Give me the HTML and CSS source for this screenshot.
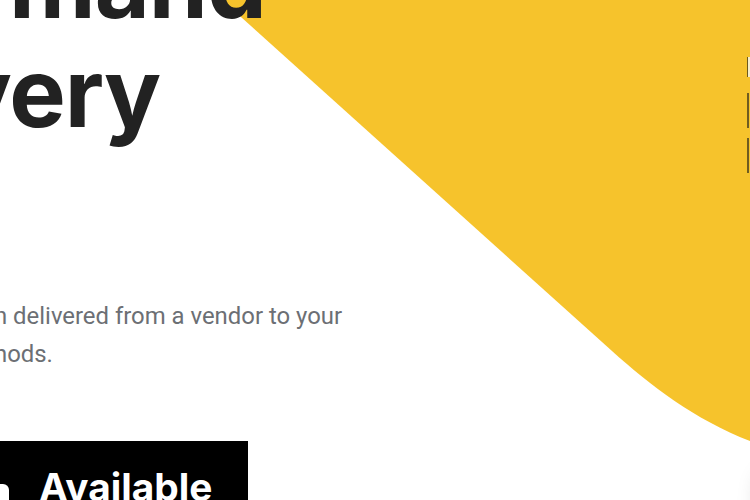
FILE: index.html
```html
<!DOCTYPE html>
<html lang="en">
<head>
<meta charset="utf-8">
<title>On-demand delivery</title>
<link rel="stylesheet" href="styles.css">
</head>
<body>
  <div class="blob" aria-hidden="true">
    <svg width="750" height="500" viewBox="0 0 750 500">
      <path d="M222 0 L612 351 C650 385 695 420 750 441 L750 0 Z" fill="#F6C32C"/>
    </svg>
  </div>
  <main class="hero">
    <div class="hero-text">
      <h1 class="title"><span class="line line-1">mand</span><span class="line line-2">very</span></h1>
      <p class="lead">n delivered from a vendor to your<br>hods.</p>
      <a class="store-btn" href="#">
        <span class="store-icon"></span>
        <span class="store-label">Available</span>
      </a>
    </div>
  </main>
  <div class="edge-marks" aria-hidden="true">
    <span class="mark mark-light"></span>
    <span class="mark mark-dark"></span>
    <span class="mark mark-dark"></span>
  </div>
  <div class="card-shadow" aria-hidden="true"></div>
</body>
</html>
```

FILE: styles.css
```css
html, body {
  margin: 0;
  padding: 0;
}
body {
  width: 750px;
  height: 500px;
  overflow: hidden;
  background: #ffffff;
  position: relative;
  font-family: "Roboto", "Liberation Sans", sans-serif;
}
.blob {
  position: absolute;
  left: 0;
  top: 0;
  width: 750px;
  height: 500px;
  z-index: 0;
}
.blob svg {
  display: block;
}
.hero {
  position: relative;
  z-index: 1;
}
.hero-text {
  display: flex;
  flex-direction: column;
  align-items: flex-start;
}
.title {
  margin: -71px 0 0 0;
  font-family: "Inter", "Open Sans", sans-serif;
  font-weight: 700;
  font-size: 95px;
  line-height: 109px;
  color: #222222;
  letter-spacing: -1px;
  display: flex;
  flex-direction: column;
}
.line-1 {
  margin-left: 9px;
}
.line-2 {
  margin-left: -45px;
}
.lead {
  margin: 150px 0 0 -6px;
  font-family: "Roboto", sans-serif;
  font-size: 23.9px;
  line-height: 38px;
  color: #6c6f74;
}
.store-btn {
  margin-top: 68px;
  margin-left: -20px;
  width: 268px;
  height: 90px;
  background: #000000;
  color: #ffffff;
  text-decoration: none;
  display: flex;
  align-items: flex-start;
  gap: 30px;
  padding: 24px 0 0 12px;
  box-sizing: border-box;
}
.store-icon {
  margin-top: 19px;
  width: 17px;
  height: 24px;
  background: #ffffff;
  border-radius: 6px 6px 3px 3px;
}
.store-label {
  font-family: "Inter", sans-serif;
  font-weight: 700;
  font-size: 38.8px;
  line-height: 44px;
}
.edge-marks {
  position: absolute;
  left: 747px;
  top: 57px;
  display: flex;
  flex-direction: column;
  gap: 16px;
  z-index: 2;
}
.mark {
  display: block;
  width: 3px;
}
.mark-light {
  height: 20px;
  background: #f6ecc8;
  border-left: 1px solid #6b5a1e;
  box-sizing: border-box;
}
.mark-dark {
  height: 35px;
  border-left: 2px solid #6f5c20;
}
.mark-dark + .mark-dark {
  margin-top: -6px;
}
.card-shadow {
  position: absolute;
  left: 765px;
  top: 478px;
  width: 120px;
  height: 60px;
  border-radius: 10px;
  box-shadow: 0 0 22px 6px rgba(0, 0, 0, 0.18);
  background: #ffffff;
}
```
